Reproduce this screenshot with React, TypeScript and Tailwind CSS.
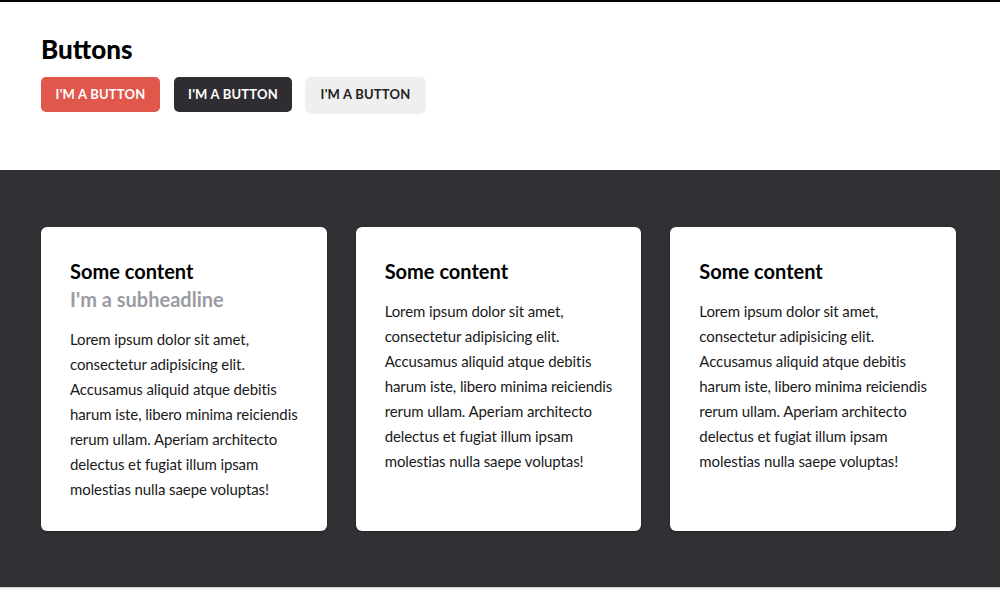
import React from 'react';

const lines = [
  'Lorem ipsum dolor sit amet,',
  'consectetur adipisicing elit.',
  'Accusamus aliquid atque debitis',
  'harum iste, libero minima reiciendis',
  'rerum ullam. Aperiam architecto',
  'delectus et fugiat illum ipsam',
  'molestias nulla saepe voluptas!',
];

function Card({ sub }: { sub?: string }) {
  return (
    <div className="bg-white rounded-[6px] px-[29px] pt-[30px] pb-[29px] shadow-[0_1px_3px_rgba(0,0,0,0.3)]">
      <div className="mb-[14px]">
        <h3 className="text-[20px] leading-[28px] font-bold text-black">Some content</h3>
        {sub && <h4 className="text-[20px] leading-[28px] font-bold text-[#9a9ba3]">{sub}</h4>}
      </div>
      <p className="text-[15px] leading-[25px] text-[#1a1a1a] whitespace-nowrap tracking-[-0.1px]">
        {lines.map((l) => (
          <span key={l} className="block">
            {l}
          </span>
        ))}
      </p>
    </div>
  );
}

export default function App() {
  return (
    <div className="w-[1000px] h-[590px] overflow-hidden bg-white flex flex-col" style={{ fontFamily: 'Lato, "Noto Sans", sans-serif' }}>
      <div className="h-[2px] bg-black" />
      <section className="h-[168px] pl-[41px] pt-[31px]">
        <h2 className="text-[26px] leading-[32px] font-black text-black">Buttons</h2>
        <div className="flex gap-[14px] mt-[12px]">
          <button className="w-[119px] h-[35px] rounded-[5px] bg-[#e0574b] text-white text-[13px] font-bold uppercase tracking-[0.2px] pt-[1px]">
            I'm a button
          </button>
          <button className="w-[118px] h-[35px] rounded-[5px] bg-[#2f2d31] text-white text-[13px] font-bold uppercase tracking-[0.2px] pt-[1px]">
            I'm a button
          </button>
          <button className="w-[119px] h-[35px] rounded-[5px] bg-[#efefef] text-[#222] text-[13px] font-bold uppercase tracking-[0.2px] pt-[1px] shadow-[0_1px_3px_rgba(0,0,0,0.12)]">
            I'm a button
          </button>
        </div>
      </section>
      <section className="h-[417px] bg-[#323034] pl-[41px] pr-[44px] pt-[57px]">
        <div className="grid grid-cols-3 gap-[29px]">
          <Card sub="I'm a subheadline" />
          <Card />
          <Card />
        </div>
      </section>
      <div className="h-[1px] bg-[#cfcfcf]" />
      <div className="flex-1 bg-[#f4f4f4]" />
    </div>
  );
}
